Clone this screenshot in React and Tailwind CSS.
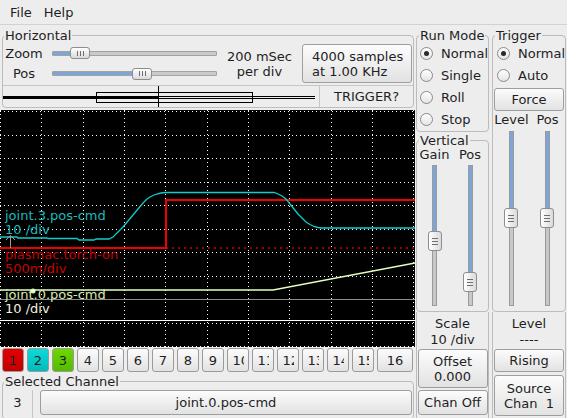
import React from "react";

function Btn({ className = "", children }) {
  return (
    <div
      className={
        "rounded-[3px] border border-[#9e9e9e] bg-linear-to-b from-[#fcfcfc] to-[#e2e2e2] " +
        className
      }
    >
      {children}
    </div>
  );
}

function HThumb({ className }) {
  return (
    <div
      className={
        "absolute top-[0px] w-[20px] h-[12px] rounded-[3px] border border-[#8e8e8e] bg-linear-to-b from-[#ffffff] to-[#dadada] flex items-center justify-center gap-[2px] " +
        className
      }
    >
      <div className="w-[1px] h-[5px] bg-[#6e6e6e]" />
      <div className="w-[1px] h-[5px] bg-[#6e6e6e]" />
      <div className="w-[1px] h-[5px] bg-[#6e6e6e]" />
    </div>
  );
}

function VThumb({ className }) {
  return (
    <div
      className={
        "absolute left-[0px] w-[14px] h-[20px] rounded-[3px] border border-[#8e8e8e] bg-linear-to-r from-[#ffffff] to-[#dadada] flex flex-col items-center justify-center gap-[2px] " +
        className
      }
    >
      <div className="w-[6px] h-[1px] bg-[#6e6e6e]" />
      <div className="w-[6px] h-[1px] bg-[#6e6e6e]" />
      <div className="w-[6px] h-[1px] bg-[#6e6e6e]" />
    </div>
  );
}

function Radio({ checked, label }) {
  return (
    <div className="flex items-center h-[22px]">
      <div className="w-[13px] h-[13px] rounded-full border border-[#8a8a8a] bg-linear-to-b from-[#ffffff] to-[#e4e4e4] flex items-center justify-center">
        {checked && <div className="w-[5px] h-[5px] rounded-full bg-[#2a2a2a]" />}
      </div>
      <span className="ml-[8px]">{label}</span>
    </div>
  );
}

function Scope() {
  const W = 415;
  const H = 237;
  const vx = Array.from({ length: 11 }, (_, i) => Math.round(i * 41.33) + 0.5);
  const hy = Array.from({ length: 11 }, (_, i) => Math.round(1 + i * 23.5) + 0.5);
  const cyan =
    "0,127 17,127 18,128 47,128 48,128.5 77,128.5 79,130 94,130 96,129 109,129 113,127 118,122 123,117 128,111 133,105 138,99 143,93 147,89 150,87 154,85 157,84 161,83 165,82.5 274,82.5 278,84 282,86 286,89 290,94 294,99 298,104 302,108 306,112 310,114.5 314,116.5 318,117.5 322,118 415,118";
  return (
    <svg width={W} height={H} className="block bg-black">
      {vx.map((x, i) => (
        <line key={"v" + i} x1={x} x2={x} y1={0} y2={H} stroke="#ffffff" strokeDasharray="1 3" shapeRendering="crispEdges" />
      ))}
      {hy.map((y, i) => (
        <line key={"h" + i} x1={0} x2={W} y1={y} y2={y} stroke="#ffffff" strokeDasharray="1 3" shapeRendering="crispEdges" />
      ))}
      <line x1={0} x2={W} y1={189.5} y2={189.5} stroke="#8c8c8c" strokeWidth="1" shapeRendering="crispEdges" />
      <line x1={0} x2={W} y1={210.5} y2={210.5} stroke="#ffffff" strokeWidth="1" shapeRendering="crispEdges" />
      <polyline points="166,138 415,138" fill="none" stroke="#d00000" strokeWidth="1.5" strokeDasharray="2 4" />
      <polyline points="0,138 166,138 166,90 415,90" fill="none" stroke="#ee0000" strokeWidth="2" />
      <polyline points={cyan} fill="none" stroke="#10cccc" strokeWidth="1.3" />
      <polyline points="0,180 273,180 415,153" fill="none" stroke="#e4ffc0" strokeWidth="1.3" />
      <circle cx="33" cy="181" r="2.5" fill="#e4ffc0" />
      <line x1="10.5" x2="10.5" y1="126" y2="138" stroke="#9a9a9a" strokeWidth="1" />
      <polyline points="6,130 10.5,125.5 15,130" fill="none" stroke="#9a9a9a" strokeWidth="1" />
      <text x="5" y="110" fontSize="13" fill="#1cbaba">joint.3.pos-cmd</text>
      <text x="5" y="124" fontSize="13" fill="#1cbaba">10 /div</text>
      <text x="5" y="149.3" fontSize="13" fill="#c80000">plasmac.torch-on</text>
      <text x="5" y="163.3" fontSize="13" fill="#c80000">500m/div</text>
      <text x="5" y="188.7" fontSize="13" fill="#d8eab0">joint.0.pos-cmd</text>
      <text x="5" y="203.3" fontSize="13" fill="#f2f2e0">10 /div</text>
    </svg>
  );
}

function ChanBtn({ n, color, wide }) {
  const colors = {
    red: "from-[#e40000] to-[#c20000]",
    cyan: "from-[#10d8d8] to-[#00bcbc]",
    green: "from-[#6cd800] to-[#54bc00]",
  };
  const bg = color ? colors[color] : "from-[#fcfcfc] to-[#e2e2e2]";
  return (
    <div
      className={
        "h-[24px] rounded-[3px] border border-[#9a9a9a] bg-linear-to-b flex items-center justify-center " +
        bg +
        (wide ? " w-[36px]" : " w-[22px]")
      }
    >
      <div className={wide ? "text-center" : "w-[11px] overflow-hidden whitespace-nowrap text-center"}>{n}</div>
    </div>
  );
}

export default function App() {
  const chans = [
    { n: 1, color: "red" },
    { n: 2, color: "cyan" },
    { n: 3, color: "green" },
  ];
  for (let i = 4; i <= 15; i++) chans.push({ n: i });
  return (
    <div className="w-[567px] h-[418px] overflow-hidden bg-[#ededed] text-[13px] leading-[15px] text-[#1e1e24] font-['DejaVu_Sans','Liberation_Sans',sans-serif] select-none">
      <div className="h-[25px] border-b border-[#d2d2d2] flex items-center pl-[10px] gap-[12px]">
        <span>File</span>
        <span>Help</span>
      </div>
      <div className="flex">
        {/* Left column */}
        <div className="w-[415px] flex flex-col">
          <fieldset className="mt-[3px] ml-[2px] w-[412px] border border-[#bcbcbc] rounded-[4px]">
            <legend className="ml-[1px] px-[1px] leading-[15px]">Horizontal</legend>
            <div className="flex h-[42px]">
              <div className="w-[42px] flex flex-col">
                <div className="h-[20px] flex items-center justify-center">Zoom</div>
                <div className="h-[21px] flex items-center justify-center">Pos</div>
              </div>
              <div className="ml-[7px] w-[165px] flex flex-col">
                <div className="h-[20px] flex items-center">
                  <div className="relative w-[165px] h-[12px] flex items-center">
                    <div className="w-full h-[5px] rounded-[1px] border border-[#a2a2a2] bg-[#cacaca] flex overflow-hidden">
                      <div className="w-[20px] h-full bg-[#7ea5da]" />
                    </div>
                    <HThumb className="left-[18px]" />
                  </div>
                </div>
                <div className="h-[21px] flex items-center">
                  <div className="relative w-[165px] h-[12px] flex items-center">
                    <div className="w-full h-[5px] rounded-[1px] border border-[#a2a2a2] bg-[#cacaca] flex overflow-hidden">
                      <div className="w-[82px] h-full bg-[#7ea5da]" />
                    </div>
                    <HThumb className="left-[80px]" />
                  </div>
                </div>
              </div>
              <div className="w-[85px] flex flex-col justify-center items-center text-center">
                <div>200 mSec</div>
                <div>per div</div>
              </div>
              <Btn className="w-[110px] h-[39px] mt-[1px] flex flex-col justify-center pl-[9px]">
                <div>4000 samples</div>
                <div>at 1.00 KHz</div>
              </Btn>
            </div>
            <div className="flex h-[22px] border-t border-[#c6c6c6]">
              <svg width="316" height="21" className="block">
                <rect x="0" y="10" width="155" height="3" fill="#000" />
                <line x1="155" x2="312" y1="10.5" y2="10.5" stroke="#000" strokeWidth="1" shapeRendering="crispEdges" />
                <line x1="155" x2="312" y1="12.5" y2="12.5" stroke="#000" strokeWidth="1" shapeRendering="crispEdges" />
                <rect x="93.5" y="6.5" width="156" height="10" fill="none" stroke="#000" strokeWidth="1" shapeRendering="crispEdges" />
                <line x1="155.5" x2="155.5" y1="0" y2="21" stroke="#000" strokeWidth="1" shapeRendering="crispEdges" />
              </svg>
              <div className="flex-1 border-l border-[#c6c6c6] flex items-center justify-center">TRIGGER?</div>
            </div>
          </fieldset>
          <div className="mt-[2px] h-[237px]">
            <Scope />
          </div>
          <div className="mt-[1px] h-[24px] flex gap-[3px] pl-[2px]">
            {chans.map((c) => (
              <ChanBtn key={c.n} n={c.n} color={c.color} />
            ))}
            <ChanBtn n={16} wide />
          </div>
          <fieldset className="mt-[2px] ml-[2px] w-[412px] border border-[#bcbcbc] rounded-[4px]">
            <legend className="ml-[1px] px-[1px] leading-[15px]">Selected Channel</legend>
            <div className="flex h-[30px]">
              <div className="w-[30px] mt-[1px] border-r border-[#c6c6c6] flex items-start pt-[5px] justify-center">3</div>
              <Btn className="ml-[7px] w-[372px] h-[25px] mt-[1px] flex items-center justify-center">joint.0.pos-cmd</Btn>
            </div>
          </fieldset>
        </div>

        {/* Run Mode / Vertical column */}
        <div className="w-[73px] ml-[1px] flex flex-col">
          <fieldset className="mt-[3px] w-[73px] border border-[#bcbcbc] rounded-[4px]">
            <legend className="ml-[2px] px-[1px] leading-[15px]">Run Mode</legend>
            <div className="-mt-[1px] pl-[3px] pb-[1px] flex flex-col">
              <Radio checked label="Normal" />
              <Radio label="Single" />
              <Radio label="Roll" />
              <Radio label="Stop" />
            </div>
          </fieldset>
          <fieldset className="mt-[1px] w-[73px] border border-[#bcbcbc] rounded-[4px]">
            <legend className="ml-[2px] px-[1px] leading-[15px]">Vertical</legend>
            <div className="flex leading-[14px] h-[14px]">
              <div className="w-[35px] text-center">Gain</div>
              <div className="w-[36px] text-center">Pos</div>
            </div>
            <div className="flex mt-[3px] h-[141px] mb-[5px]">
              <div className="w-[35px] flex justify-center">
                <div className="relative w-[14px] h-full flex justify-center">
                  <div className="w-[5px] h-full border border-[#9a9a9a] bg-[#c8c8c8] flex flex-col">
                    <div className="h-[70px] bg-[#7ea5da]" />
                  </div>
                  <VThumb className="top-[66px]" />
                </div>
              </div>
              <div className="w-[36px] flex justify-center">
                <div className="relative w-[14px] h-full flex justify-center">
                  <div className="w-[5px] h-full border border-[#9a9a9a] bg-[#c8c8c8] flex flex-col">
                    <div className="h-[112px] bg-[#7ea5da]" />
                  </div>
                  <VThumb className="top-[107px]" />
                </div>
              </div>
            </div>
          </fieldset>
          <div className="flex-1 h-[110px] border-x border-[#bcbcbc] flex flex-col items-center">
            <div className="mt-[4px] leading-[16px] text-center">
              <div>Scale</div>
              <div>10 /div</div>
            </div>
            <Btn className="mt-[1px] w-[70px] h-[39px] flex flex-col items-center justify-center">
              <div>Offset</div>
              <div>0.000</div>
            </Btn>
            <Btn className="mt-[2px] w-[70px] h-[25px] flex items-center justify-center">Chan Off</Btn>
          </div>
        </div>

        {/* Trigger column */}
        <div className="w-[74px] ml-[3px] flex flex-col">
          <fieldset className="mt-[3px] w-[74px] border border-[#bcbcbc] rounded-[4px]">
            <legend className="ml-[2px] px-[1px] leading-[15px]">Trigger</legend>
            <div className="-mt-[1px] pl-[4px] flex flex-col">
              <Radio checked label="Normal" />
              <Radio label="Auto" />
            </div>
            <Btn className="mt-[2px] ml-[1px] w-[70px] h-[23px] flex items-center justify-center">Force</Btn>
            <div className="flex h-[17px] items-center">
              <div className="w-[37px] text-center">Level</div>
              <div className="w-[35px] text-center">Pos</div>
            </div>
            <div className="flex mt-[3px] h-[175px] mb-[5px]">
              <div className="w-[36px] flex justify-center">
                <div className="relative w-[14px] h-full flex justify-center">
                  <div className="w-[5px] h-full border border-[#9a9a9a] bg-[#c8c8c8] flex flex-col">
                    <div className="h-[80px] bg-[#7ea5da]" />
                  </div>
                  <VThumb className="top-[77px]" />
                </div>
              </div>
              <div className="w-[36px] flex justify-center">
                <div className="relative w-[14px] h-full flex justify-center">
                  <div className="w-[5px] h-full border border-[#9a9a9a] bg-[#c8c8c8] flex flex-col">
                    <div className="h-[80px] bg-[#7ea5da]" />
                  </div>
                  <VThumb className="top-[77px]" />
                </div>
              </div>
            </div>
          </fieldset>
          <div className="flex-1 h-[110px] border-x border-[#bcbcbc] flex flex-col items-center">
            <div className="mt-[4px] leading-[16px] text-center">
              <div>Level</div>
              <div>----</div>
            </div>
            <Btn className="mt-[1px] w-[70px] h-[23px] flex items-center justify-center">Rising</Btn>
            <Btn className="mt-[3px] w-[70px] h-[41px] flex flex-col items-center justify-center">
              <div>Source</div>
              <div>Chan&nbsp;&nbsp;1</div>
            </Btn>
          </div>
        </div>
      </div>
    </div>
  );
}
